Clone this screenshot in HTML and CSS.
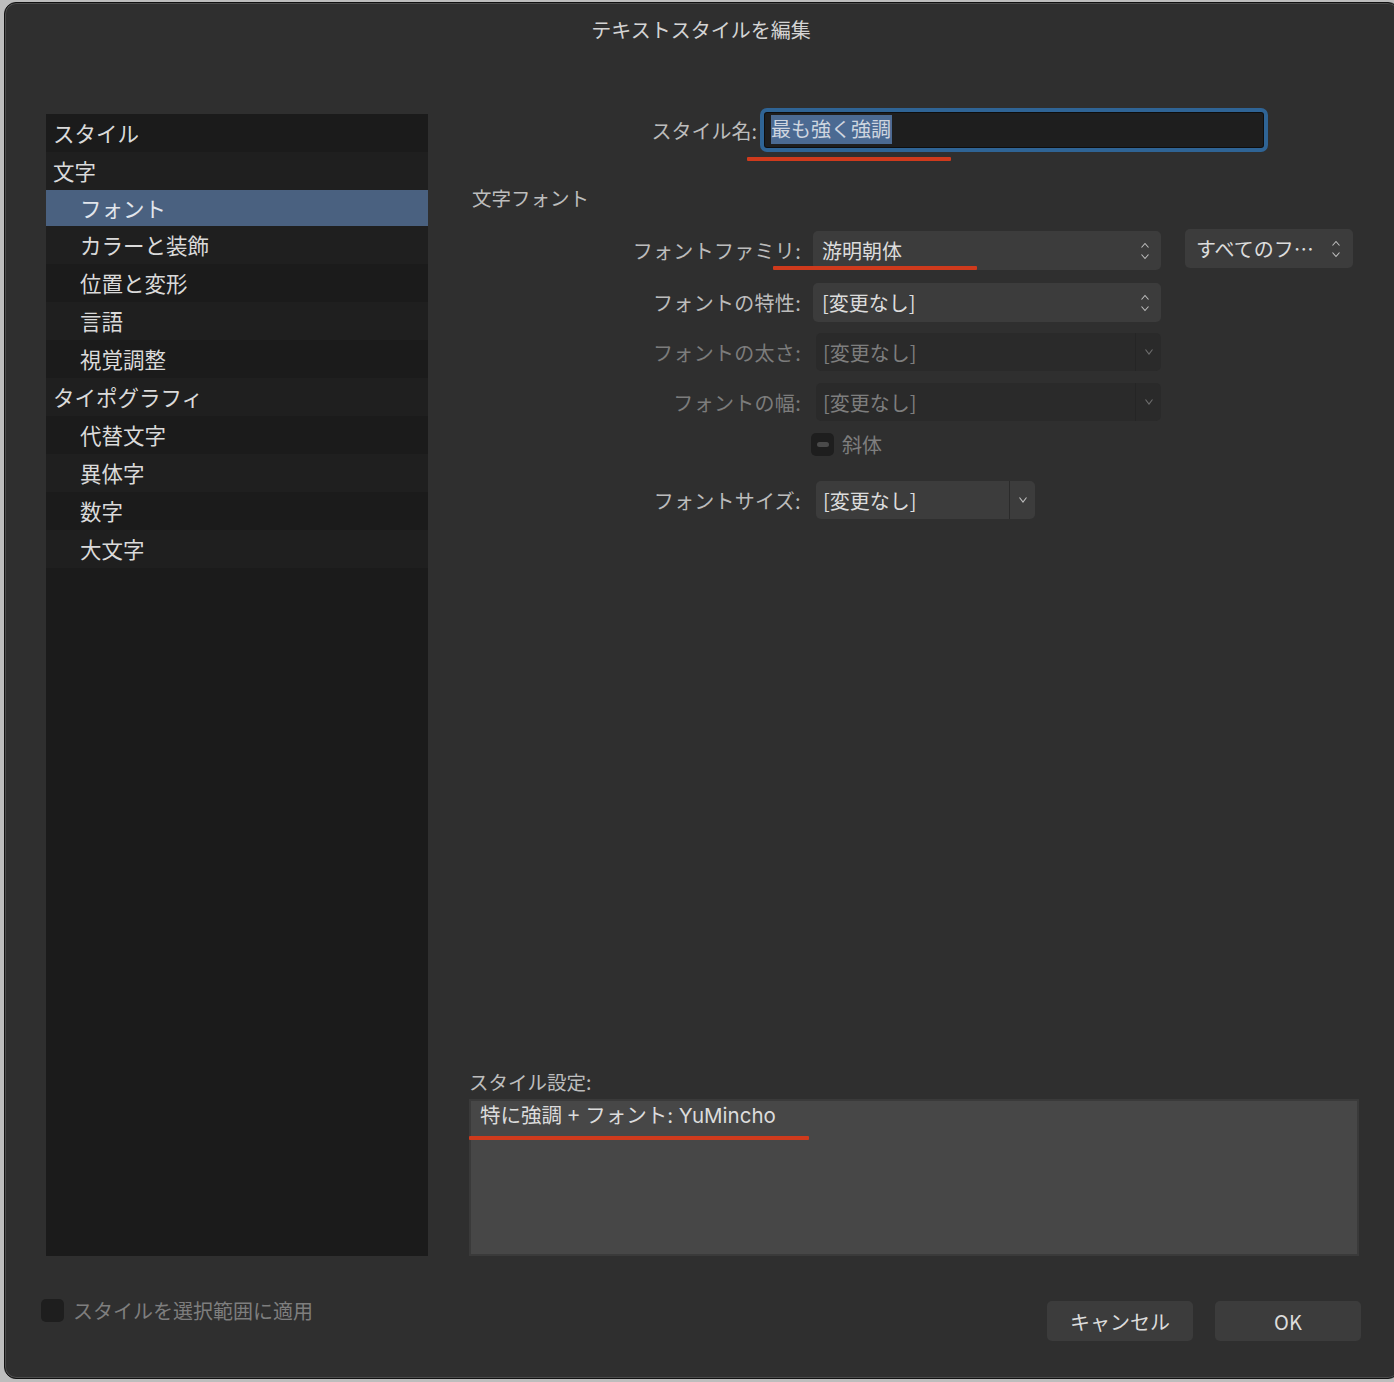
FILE: index.html
```html
<!DOCTYPE html>
<html lang="ja">
<head>
<meta charset="utf-8">
<title>テキストスタイルを編集</title>
<link rel="stylesheet" href="styles.css">
</head>
<body>
<div class="dialog">
  <h1 class="title">テキストスタイルを編集</h1>
  <div class="main">
    <ul class="nav">
      <li class="top">スタイル</li>
      <li class="top">文字</li>
      <li class="sub selected">フォント</li>
      <li class="sub">カラーと装飾</li>
      <li class="sub">位置と変形</li>
      <li class="sub">言語</li>
      <li class="sub">視覚調整</li>
      <li class="top">タイポグラフィ</li>
      <li class="sub">代替文字</li>
      <li class="sub">異体字</li>
      <li class="sub">数字</li>
      <li class="sub">大文字</li>
    </ul>
    <div class="panel">
      <div class="name-row">
        <label class="name-label">スタイル名:</label>
        <div class="name-input"><span class="sel">最も強く強調</span></div>
        <span class="mark mark-name"></span>
      </div>
      <div class="section">文字フォント</div>
      <div class="form">
        <div class="row row-family">
          <label class="lbl">フォントファミリ:</label>
          <div class="select w-main"><span>游明朝体</span><svg class="updown" width="10" height="20" viewBox="0 0 10 20"><path d="M1.5 6.5 L5 2.5 L8.5 6.5 M1.5 13.5 L5 17.5 L8.5 13.5" fill="none" stroke="#bdbdbd" stroke-width="1.1"/></svg></div>
          <div class="select w-extra"><span>すべてのフ…</span><svg class="updown" width="10" height="20" viewBox="0 0 10 20"><path d="M1.5 6.5 L5 2.5 L8.5 6.5 M1.5 13.5 L5 17.5 L8.5 13.5" fill="none" stroke="#bdbdbd" stroke-width="1.1"/></svg></div>
          <span class="mark mark-family"></span>
        </div>
        <div class="row row-trait">
          <label class="lbl">フォントの特性:</label>
          <div class="select w-main"><span>[変更なし]</span><svg class="updown" width="10" height="20" viewBox="0 0 10 20"><path d="M1.5 6.5 L5 2.5 L8.5 6.5 M1.5 13.5 L5 17.5 L8.5 13.5" fill="none" stroke="#bdbdbd" stroke-width="1.1"/></svg></div>
        </div>
        <div class="row row-weight">
          <label class="lbl disabled">フォントの太さ:</label>
          <div class="combo disabled w-dis"><span class="val">[変更なし]</span><span class="btn"><svg width="10" height="8" viewBox="0 0 10 8"><path d="M1.5 1.5 L5 6 L8.5 1.5" fill="none" stroke="#6e6e6e" stroke-width="1.1"/></svg></span></div>
        </div>
        <div class="row row-width">
          <label class="lbl disabled">フォントの幅:</label>
          <div class="combo disabled w-dis"><span class="val">[変更なし]</span><span class="btn"><svg width="10" height="8" viewBox="0 0 10 8"><path d="M1.5 1.5 L5 6 L8.5 1.5" fill="none" stroke="#6e6e6e" stroke-width="1.1"/></svg></span></div>
        </div>
        <div class="row row-italic">
          <span class="lbl"></span>
          <span class="check mixed"><span class="dash"></span></span>
          <span class="check-text">斜体</span>
        </div>
        <div class="row row-size">
          <label class="lbl">フォントサイズ:</label>
          <div class="combo w-size"><span class="val">[変更なし]</span><span class="btn"><svg width="10" height="8" viewBox="0 0 10 8"><path d="M1.5 1.5 L5 6 L8.5 1.5" fill="none" stroke="#bdbdbd" stroke-width="1.1"/></svg></span></div>
        </div>
      </div>
      <div class="settings">
        <div class="settings-label">スタイル設定:</div>
        <div class="settings-box">特に強調 <span class="plus">+</span> フォント: YuMincho<span class="mark mark-settings"></span></div>
      </div>
    </div>
  </div>
  <div class="footer">
    <div class="apply">
      <span class="check"></span>
      <span class="apply-text">スタイルを選択範囲に適用</span>
    </div>
    <div class="buttons">
      <button class="button">キャンセル</button>
      <button class="button">OK</button>
    </div>
  </div>
</div>
</body>
</html>
```

FILE: styles.css
```css
* { box-sizing: border-box; }

html, body {
  margin: 0;
  padding: 0;
}

body {
  background: #bdbdbd;
  width: 1394px;
  height: 1382px;
  overflow: hidden;
  font-family: "Noto Sans CJK JP", "Noto Sans", sans-serif;
  color: #dcdcdc;
}

.dialog {
  margin: 2px 0 0 4px;
  width: 1396px;
  height: 1377px;
  background: #2f2f2f;
  border-radius: 12px;
  border: 1px solid #111;
  box-shadow: inset 0 0 0 1px #4c4c4c;
  display: flex;
  flex-direction: column;
  overflow: hidden;
}

.title {
  margin: 13px 0 0 0;
  padding-right: 2px;
  height: 28px;
  line-height: 28px;
  font-size: 20px;
  font-weight: 400;
  text-align: center;
  color: #d4d4d4;
}

.main {
  margin-top: 70px;
  padding-left: 41px;
  height: 1142px;
  display: flex;
  gap: 41px;
}

.nav {
  list-style: none;
  margin: 0;
  padding: 0;
  width: 382px;
  height: 100%;
  background: #1b1b1b;
}

.nav li {
  height: 38px;
  line-height: 38px;
  font-size: 21.5px;
  color: #dadada;
  white-space: nowrap;
}

.nav li:nth-child(even) { background: #1f1f1f; }
.nav li.top { padding-left: 7px; }
.nav li.sub { padding-left: 34px; }
.nav li.selected { background: #4a6180; color: #e2e6ec; height: 36px; line-height: 36px; }

.panel {
  width: 890px;
  display: flex;
  flex-direction: column;
  position: relative;
}

.name-row {
  margin-top: -6px;
  height: 44px;
  display: flex;
  align-items: center;
  position: relative;
}

.name-label {
  width: 288px;
  text-align: right;
  font-size: 20px;
  color: #bcbcbc;
  margin-right: 3px;
}

.name-input {
  width: 508px;
  height: 44px;
  border: 4px solid #2f6495;
  border-radius: 7px;
  background: #1e1e1e;
  box-shadow: inset 0 0 0 1px #0e0e0e;
  padding: 3px 0 0 7px;
}

.sel {
  display: inline-block;
  background: #4b6a92;
  color: #cfd6e0;
  font-size: 20px;
  line-height: 28px;
  height: 29px;
  padding-right: 1px;
}

.mark {
  position: absolute;
  height: 4px;
  background: #cf3a1c;
  border-radius: 1px;
}

.mark-name { left: 278px; width: 204px; top: 49px; }
.mark-family { left: 304px; width: 204px; top: 35px; }
.mark-settings { left: -2px; width: 340px; top: 35px; }

.section {
  margin-top: 32px;
  padding-left: 3px;
  font-size: 19.5px;
  line-height: 28px;
  color: #bdbdbd;
}

.form {
  display: flex;
  flex-direction: column;
}

.row {
  display: flex;
  align-items: center;
  position: relative;
}

.lbl {
  width: 332px;
  flex: none;
  text-align: right;
  font-size: 20px;
  color: #bcbcbc;
  margin-right: 12px;
  white-space: nowrap;
  letter-spacing: 0.3px;
}

.lbl.disabled { color: #7c7c7c; }

.row-family { margin-top: 19px; height: 39px; }
.row-trait { margin-top: 13px; height: 39px; }
.row-weight { margin-top: 11px; height: 38px; }
.row-width { margin-top: 12px; height: 38px; }
.row-italic { margin-top: 12px; height: 23px; }
.row-size { margin-top: 25px; height: 38px; }

.select {
  height: 39px;
  background: #3c3c3c;
  border-radius: 5px;
  display: flex;
  align-items: center;
  justify-content: space-between;
  padding: 0 11px 0 9px;
  font-size: 20px;
  color: #dcdcdc;
}

.w-main { width: 348px; }
.w-extra { width: 168px; margin-left: 24px; margin-top: -4px; padding-left: 11px; padding-right: 12px; }

.combo {
  height: 38px;
  background: #3c3c3c;
  border-radius: 5px;
  display: flex;
  align-items: stretch;
  margin-left: 3px;
  font-size: 20px;
  color: #dcdcdc;
}

.combo .val {
  flex: 1;
  display: flex;
  align-items: center;
  padding-left: 7px;
  border-right: 1px solid #2b2b2b;
}

.combo .btn {
  width: 25px;
  display: flex;
  align-items: center;
  justify-content: center;
}

.combo.disabled {
  background: #2a2a2a;
  color: #7e7e7e;
}

.combo.disabled .val { border-right-color: #252525; }

.w-dis { width: 345px; }
.w-size { width: 219px; }

.check {
  width: 23px;
  height: 23px;
  border-radius: 5px;
  background: #1e1e1e;
  display: inline-flex;
  align-items: center;
  justify-content: center;
  flex: none;
}

.row-italic .check { margin-left: -2px; }

.check .dash {
  width: 12px;
  height: 5px;
  border-radius: 3px;
  background: #4a4a4a;
}

.check-text {
  margin-left: 8px;
  font-size: 20px;
  color: #7e7e7e;
}

.settings {
  margin-top: auto;
  display: flex;
  flex-direction: column;
}

.settings-label {
  font-size: 19.5px;
  line-height: 28px;
  color: #bdbdbd;
  margin-bottom: 3px;
}

.settings-box {
  position: relative;
  height: 157px;
  background: #474747;
  border: 2px solid #3a3a3a;
  padding: 0 0 0 9px;
  font-family: "Inter", "Noto Sans CJK JP", sans-serif;
  font-size: 20.5px;
  line-height: 26px;
  color: #dcdcdc;
}

.plus {
  font-family: "Noto Sans CJK JP", sans-serif;
  font-size: 21px;
}

.footer {
  flex: 1;
  display: flex;
  justify-content: space-between;
  align-items: flex-start;
  padding: 43px 38px 0 36px;
}

.apply {
  display: flex;
  align-items: center;
  height: 23px;
}

.apply-text {
  margin-left: 9px;
  font-size: 20px;
  color: #7e7e7e;
}

.buttons {
  display: flex;
  gap: 22px;
  margin-top: 2px;
}

.button {
  width: 146px;
  height: 40px;
  border: none;
  border-radius: 5px;
  background: #3c3c3c;
  color: #dcdcdc;
  font-family: "Noto Sans CJK JP", "Noto Sans", sans-serif;
  font-size: 20px;
  padding: 0;
}
```
